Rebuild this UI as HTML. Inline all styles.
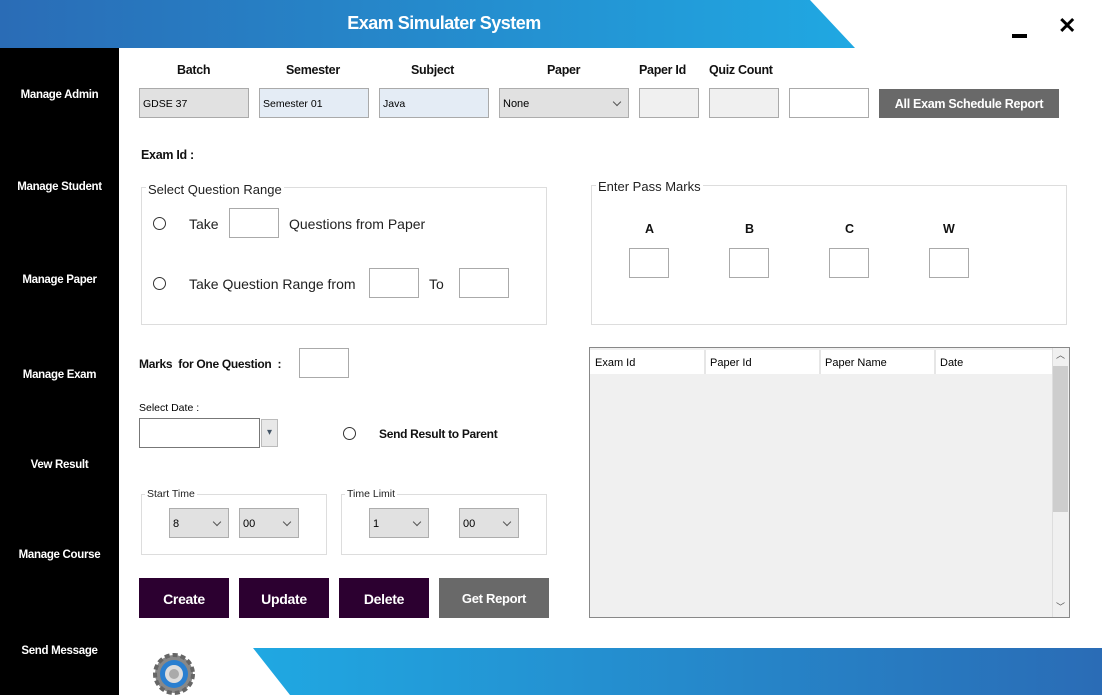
<!DOCTYPE html>
<html><head><style>
*{margin:0;padding:0;box-sizing:border-box}
body{width:1102px;height:695px;position:relative;background:#fff;font-family:"Liberation Sans",sans-serif;overflow:hidden}
.a{position:absolute}
.side{left:0;top:48px;width:119px;height:647px;background:#000}
.nav{position:absolute;left:0;width:119px;text-align:center;color:#fff;font-weight:bold;font-size:11.5px;letter-spacing:-0.3px}
.lbl{position:absolute;font-weight:bold;font-size:12.5px;color:#111;letter-spacing:-0.3px}
.in{position:absolute;border:1px solid #aaa;background:#fff;font-size:10.5px;padding:9px 3px;line-height:12px}
.g{position:absolute;border:1px solid #ddd}
.gt{position:absolute;background:#fff;font-size:13px;color:#222;padding:0 2px}
.t{position:absolute;font-size:14px;color:#222}
.rad{position:absolute;width:13px;height:13px;border:1px solid #333;border-radius:50%;background:#fff}
.btn{position:absolute;color:#fff;font-weight:bold;font-size:14px;text-align:center;line-height:42px;height:40px;background:#2c0030;letter-spacing:-0.3px}
.sel{position:absolute;background:#e1e1e1;border:1px solid #adadad;font-size:11px;padding:8px 3px;line-height:14px}
.sel:after{content:"";position:absolute;right:8px;top:10px;width:5px;height:5px;border-right:1px solid #555;border-bottom:1px solid #555;transform:rotate(45deg)}
</style></head><body>
<svg class="a" style="left:0;top:0" width="1102" height="48"><defs><linearGradient id="h" x1="0" x2="1"><stop offset="0" stop-color="#2a6cb6"/><stop offset="1" stop-color="#20a8e2"/></linearGradient></defs><polygon points="0,0 810,0 855,48 0,48" fill="url(#h)"/></svg>
<div class="a" style="left:0;top:13px;width:888px;text-align:center;color:#fff;font-weight:bold;font-size:18px;letter-spacing:-0.5px">Exam Simulater System</div>
<div class="a" style="left:1012px;top:34px;width:15px;height:4px;background:#000"></div>
<div class="a" style="left:1058px;top:13px;font-size:22px;font-weight:bold;color:#000">✕</div>
<div class="a side"></div>
<div class="nav" style="top:89px">Manage Admin</div>
<div class="nav" style="top:181px">Manage Student</div>
<div class="nav" style="top:274px">Manage Paper</div>
<div class="nav" style="top:369px">Manage Exam</div>
<div class="nav" style="top:459px">Vew Result</div>
<div class="nav" style="top:549px">Manage Course</div>
<div class="nav" style="top:645px">Send Message</div>

<div class="lbl" style="left:177px;top:63px">Batch</div>
<div class="lbl" style="left:286px;top:63px">Semester</div>
<div class="lbl" style="left:411px;top:63px">Subject</div>
<div class="lbl" style="left:547px;top:63px">Paper</div>
<div class="lbl" style="left:639px;top:63px">Paper Id</div>
<div class="lbl" style="left:709px;top:63px">Quiz Count</div>
<div class="in" style="left:139px;top:88px;width:110px;height:30px;background:#e1e1e1">GDSE 37</div>
<div class="in" style="left:259px;top:88px;width:110px;height:30px;background:#e4ecf5">Semester 01</div>
<div class="in" style="left:379px;top:88px;width:110px;height:30px;background:#e4ecf5">Java</div>
<div class="sel" style="left:499px;top:88px;width:130px;height:30px">None</div>
<div class="in" style="left:639px;top:88px;width:60px;height:30px;background:#f0f0f0"></div>
<div class="in" style="left:709px;top:88px;width:70px;height:30px;background:#f0f0f0"></div>
<div class="in" style="left:789px;top:88px;width:80px;height:30px"></div>
<div class="a" style="left:879px;top:89px;width:180px;height:29px;background:#696969;color:#fff;font-weight:bold;font-size:12.5px;text-align:center;line-height:30px;letter-spacing:-0.3px">All Exam Schedule Report</div>

<div class="lbl" style="left:141px;top:148px">Exam Id :</div>

<div class="g" style="left:141px;top:187px;width:406px;height:138px"></div>
<div class="gt" style="left:146px;top:182px">Select Question Range</div>
<div class="rad" style="left:153px;top:217px"></div>
<div class="t" style="left:189px;top:216px">Take</div>
<div class="in" style="left:229px;top:208px;width:50px;height:30px"></div>
<div class="t" style="left:289px;top:216px">Questions from Paper</div>
<div class="rad" style="left:153px;top:277px"></div>
<div class="t" style="left:189px;top:276px">Take Question Range from</div>
<div class="in" style="left:369px;top:268px;width:50px;height:30px"></div>
<div class="t" style="left:429px;top:276px">To</div>
<div class="in" style="left:459px;top:268px;width:50px;height:30px"></div>

<div class="g" style="left:591px;top:185px;width:476px;height:140px"></div>
<div class="gt" style="left:596px;top:179px">Enter Pass Marks</div>
<div class="lbl" style="left:645px;top:222px">A</div>
<div class="lbl" style="left:745px;top:222px">B</div>
<div class="lbl" style="left:845px;top:222px">C</div>
<div class="lbl" style="left:943px;top:222px">W</div>
<div class="in" style="left:629px;top:248px;width:40px;height:30px"></div>
<div class="in" style="left:729px;top:248px;width:40px;height:30px"></div>
<div class="in" style="left:829px;top:248px;width:40px;height:30px"></div>
<div class="in" style="left:929px;top:248px;width:40px;height:30px"></div>

<div class="lbl" style="left:139px;top:357px;font-size:12px">Marks&nbsp; for One Question&nbsp; :</div>
<div class="in" style="left:299px;top:348px;width:50px;height:30px"></div>
<div class="a" style="left:139px;top:402px;font-size:10.5px">Select Date :</div>
<div class="in" style="left:139px;top:418px;width:121px;height:30px;border-color:#777"></div>
<div class="a" style="left:261px;top:419px;width:17px;height:28px;background:#e8e8e8;border:1px solid #bbb;color:#456;font-size:10px;text-align:center;line-height:26px">▾</div>
<div class="rad" style="left:343px;top:427px"></div>
<div class="lbl" style="left:379px;top:427px;font-size:12px">Send Result to Parent</div>

<div class="g" style="left:141px;top:494px;width:186px;height:61px"></div>
<div class="gt" style="left:145px;top:488px;font-size:10.5px">Start Time</div>
<div class="sel" style="left:169px;top:508px;width:60px;height:30px">8</div>
<div class="sel" style="left:239px;top:508px;width:60px;height:30px">00</div>
<div class="g" style="left:341px;top:494px;width:206px;height:61px"></div>
<div class="gt" style="left:345px;top:488px;font-size:10.5px">Time Limit</div>
<div class="sel" style="left:369px;top:508px;width:60px;height:30px">1</div>
<div class="sel" style="left:459px;top:508px;width:60px;height:30px">00</div>

<div class="btn" style="left:139px;top:578px;width:90px">Create</div>
<div class="btn" style="left:239px;top:578px;width:90px">Update</div>
<div class="btn" style="left:339px;top:578px;width:90px">Delete</div>
<div class="btn" style="left:439px;top:578px;width:110px;background:#696969;font-size:13px">Get Report</div>

<div class="a" style="left:589px;top:347px;width:481px;height:271px;border:1px solid #888;background:#f0f0f0"></div>
<div class="a" style="left:590px;top:350px;width:462px;height:24px;background:#fff;font-size:11px;line-height:26px">
<span class="a" style="left:5px">Exam Id</span><span class="a" style="left:114px;border-left:2px solid #e6e6e6;padding-left:4px;height:24px">Paper Id</span><span class="a" style="left:229px;border-left:2px solid #e6e6e6;padding-left:4px;height:24px">Paper Name</span><span class="a" style="left:344px;border-left:2px solid #e6e6e6;padding-left:4px;height:24px">Date</span></div>
<div class="a" style="left:1052px;top:348px;width:17px;height:269px;background:#f0f0f0;border-left:1px solid #ddd"></div>
<div class="a" style="left:1053px;top:366px;width:15px;height:146px;background:#cdcdcd"></div>
<div class="a" style="left:1053px;top:348px;width:15px;font-size:9px;text-align:center;color:#555">︿</div>
<div class="a" style="left:1053px;top:600px;width:15px;font-size:9px;text-align:center;color:#555">﹀</div>

<svg class="a" style="left:0;top:648px" width="1102" height="47"><defs><linearGradient id="f" x1="0" x2="1"><stop offset="0" stop-color="#20a8e2"/><stop offset="1" stop-color="#2a6cb6"/></linearGradient></defs><polygon points="253,0 1102,0 1102,47 290,47" fill="url(#f)"/></svg>
<svg class="a" style="left:152px;top:653px" width="44" height="42"><circle cx="22" cy="21" r="19" fill="#888" stroke="#666" stroke-width="4" stroke-dasharray="5 3"/><circle cx="22" cy="21" r="14" fill="#2a7fd0"/><circle cx="22" cy="21" r="9" fill="#ddd"/><circle cx="22" cy="21" r="5" fill="#aaa"/></svg>
</body></html>
